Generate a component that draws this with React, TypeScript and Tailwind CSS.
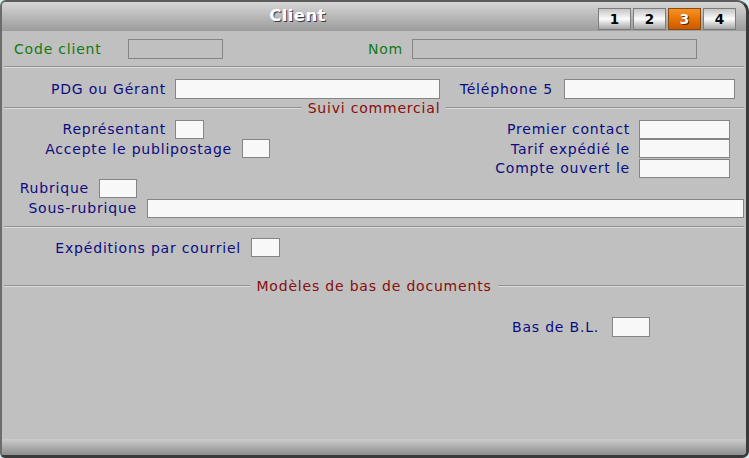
import type { ReactNode } from 'react';

// Fiche "Client", onglet 3 : suivi commercial et modèles de documents

interface FieldProps {
  width: string;
  height?: string;
  readOnly?: boolean;
}

function Field({ width, height = 'h-[19px]', readOnly = false }: FieldProps) {
  return (
    <div
      className={`${width} ${height} shrink-0 border border-[#858585] ${
        readOnly ? 'bg-[#c0c0c0]' : 'bg-[#f8f8f8]'
      }`}
    />
  );
}

function Label({ className = '', color = 'text-[#0c0c80]', children }: { className?: string; color?: string; children: ReactNode }) {
  return <div className={`shrink-0 leading-[18px] whitespace-nowrap ${color} ${className}`}>{children}</div>;
}

function Rule({ className = '' }: { className?: string }) {
  return <div className={`mx-[2px] h-0 border-t border-t-[#929292] border-b border-b-[#dcdcdc] ${className}`} />;
}

function Section({ title, className = '' }: { title: string; className?: string }) {
  return (
    <div className={`mx-[2px] flex h-[18px] items-center ${className}`}>
      <div className="h-0 flex-1 border-t border-t-[#929292] border-b border-b-[#dcdcdc]" />
      <span className="px-[6px] leading-[18px] text-[#8a0c0c]">{title}</span>
      <div className="h-0 flex-1 border-t border-t-[#929292] border-b border-b-[#dcdcdc]" />
    </div>
  );
}

function RightPair({ label }: { label: string }) {
  return (
    <div className="ml-auto mr-[16px] flex items-center">
      <Label className="pr-[9px]">{label}</Label>
      <Field width="w-[91px]" />
    </div>
  );
}

const tabs = ['1', '2', '3', '4'];
const activeTab = '3';

export default function App() {
  return (
    <div className="h-[458px] w-[749px] bg-[#d6ecec] font-['DejaVu_Sans','Liberation_Sans',sans-serif] text-[14px] tracking-[0.8px]">
      <div className="flex h-full flex-col overflow-hidden rounded-tl-[6px] rounded-tr-[12px] rounded-bl-[5px] rounded-br-[7px] border-t-2 border-l-2 border-r-[3px] border-b-[3px] border-t-[#5c5c5c] border-l-[#6c6c6c] border-r-[#3a3a3a] border-b-[#3a3a3a] bg-[#c0c0c0]">
        {/* Title bar */}
        <div className="flex h-[29px] shrink-0 bg-linear-to-b from-[#d6d6d6] to-[#9c9c9c]">
          <div className="flex flex-1 items-center justify-center pr-[5px] text-[16.5px] font-bold tracking-[0.4px] text-white [text-shadow:1px_1px_0_#3c3c3c]">
            Client
          </div>
          <div className="mr-[10px] mt-[6px] flex gap-[2px] self-start">
            {tabs.map((tab) => {
              const isActive = tab === activeTab;
              return (
                <div
                  key={tab}
                  className={`flex h-[22px] w-[33px] items-center justify-center border text-[13.5px] font-bold tracking-normal ${
                    isActive
                      ? 'border-[#8a4a10] bg-linear-to-b from-[#f49224] via-[#e87400] to-[#c85a00] text-white [text-shadow:1px_1px_0_#5a2a00]'
                      : 'border-[#7c7c7c] bg-linear-to-b from-[#c4c4c4] via-[#fcfcfc] to-[#a6a6a6] text-black'
                  }`}
                >
                  {tab}
                </div>
              );
            })}
          </div>
        </div>

        {/* Form body */}
        <div className="flex flex-1 flex-col pt-[8px]">
          <div className="flex h-[20px] items-center">
            <Label className="w-[126px] pl-[12px]" color="text-[#127a12]">Code client</Label>
            <Field width="w-[95px]" height="h-[20px]" readOnly />
            <Label className="w-[189px] pr-[9px] text-right" color="text-[#127a12]">Nom</Label>
            <Field width="w-[285px]" height="h-[20px]" readOnly />
          </div>

          <Rule className="mt-[7px]" />

          <div className="mt-[11px] flex h-[20px] items-center">
            <Label className="w-[173px] pr-[9px] text-right">PDG ou Gérant</Label>
            <Field width="w-[265px]" height="h-[20px]" />
            <Label className="w-[124px] pr-[11px] text-right">Téléphone 5</Label>
            <Field width="w-[171px]" height="h-[20px]" />
          </div>

          <Section title="Suivi commercial" />

          <div className="mt-[2px] flex h-[20px] items-center">
            <Label className="w-[173px] pr-[9px] text-right">Représentant</Label>
            <Field width="w-[29px]" />
            <RightPair label="Premier contact" />
          </div>
          <div className="flex h-[19px] items-center">
            <Label className="w-[240px] pr-[10px] text-right">Accepte le publipostage</Label>
            <Field width="w-[28px]" />
            <RightPair label="Tarif expédié le" />
          </div>
          <div className="flex h-[20px] items-center">
            <RightPair label="Compte ouvert le" />
          </div>
          <div className="flex h-[20px] items-center">
            <Label className="w-[97px] pr-[10px] text-right">Rubrique</Label>
            <Field width="w-[38px]" />
          </div>
          <div className="flex h-[20px] items-center">
            <Label className="w-[145px] pr-[10px] text-right">Sous-rubrique</Label>
            <Field width="w-[597px]" />
          </div>

          <Rule className="mt-[8px]" />

          <div className="mt-[10px] flex h-[19px] items-center">
            <Label className="w-[249px] pr-[10px] text-right">Expéditions par courriel</Label>
            <Field width="w-[29px]" />
          </div>

          <Section title="Modèles de bas de documents" className="mt-[20px]" />

          <div className="mt-[22px] flex h-[20px] items-center">
            <Label className="w-[610px] pr-[13px] text-right">Bas de B.L.</Label>
            <Field width="w-[38px]" height="h-[20px]" />
          </div>

          <div className="flex-1" />
        </div>

        {/* Bottom bar */}
        <div className="h-[16px] shrink-0 bg-linear-to-b from-[#cbcbcb] to-[#8e8e8e]" />
      </div>
    </div>
  );
}
